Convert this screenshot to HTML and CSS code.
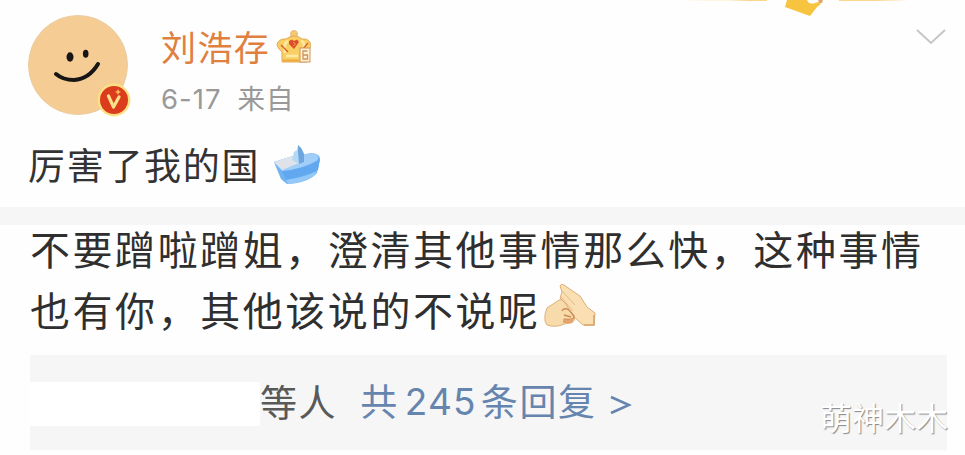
FILE: index.html
```
<!DOCTYPE html>
<html lang="zh-CN">
<head>
	<meta charset="UTF-8">
	<title>微博</title>
	<link rel="stylesheet" href="styles.css">
</head>
<body>
	<div class="post">
		<svg class="decor" width="290" height="18" viewBox="0 0 290 18">
			<path d="M0 0H88V.6H30z" fill="#fdebc8"/>
			<path d="M50 0H88V1H70z" fill="#fbd68d"/>
			<path d="M160 0H230L195 1H160z" fill="#fbd68d"/>
			<path d="M108 0H128Q130 5 136 3L139 2L142 4L138 7L131 16L106 7z" fill="#f7c440"/>
			<circle cx="141.5" cy="1" r="2.2" fill="#dfa568"/>
		</svg>
		<div class="head">
			<div class="avatar">
				<svg width="100" height="100" viewBox="0 0 100 100">
					<circle cx="50" cy="50" r="49.5" fill="#f5cc93" stroke="#ebcda2"/>
					<ellipse cx="42" cy="42" rx="3.5" ry="4.7" fill="#171515"/>
					<ellipse cx="57.7" cy="38.7" rx="2.8" ry="4" fill="#171515"/>
					<path d="M28 59Q35 65 46 65Q61 64 70 49" fill="none" stroke="#171515" stroke-width="4" stroke-linecap="round"/>
				</svg>
				<svg class="vip" width="34" height="34" viewBox="0 0 34 34">
					<circle cx="17" cy="17" r="15.2" fill="#da3c1c" stroke="#fbe084" stroke-width="2.4"/>
					<path d="M11.5 13L16.5 24L22 14" fill="none" stroke="#fde08a" stroke-width="3.2" stroke-linejoin="round" stroke-linecap="round"/>
					<path d="M21 6L22 8L24 9L22 10L21 12L20 10L18 9L20 8z" fill="#fbb75c"/>
				</svg>
			</div>
			<div class="info">
				<div class="name"><span>刘浩存</span>
					<svg width="36" height="36" viewBox="0 0 36 36">
						<circle cx="18" cy="5" r="3.5" fill="#f5c873" stroke="#e4b070" stroke-width=".8"/>
						<path d="M6 23Q-1 17 2 13Q5 9 10 10Q14 7 18 7Q23 7 26 10Q31 9 34 13Q36 18 31 23V33H6z" fill="#f9cf63" stroke="#e0ab5e"/>
						<path d="M9 24Q7 14 12 12M28 19Q29 13 25 12M10 27H22" fill="none" stroke="#fdeaa8" stroke-width="2.5"/>
						<path d="M5 16L12 23M32 14L27 20" stroke="#d9692f" stroke-width="1.6"/>
						<path d="M13 12L16 10.5L18 12L21 10.5L23 13L18 20L13 15z" fill="#dc4c2c"/>
						<path d="M17 13L19.5 15L17 17" fill="none" stroke="#f8a04b"/>
						<path d="M7 31.5H23" stroke="#eda93c" stroke-width="2"/>
						<rect x="24" y="19" width="10" height="14" fill="#fff2d5" stroke="#cf9458"/>
						<path d="M31.5 22H27V30H31.5V26H27" fill="none" stroke="#cf9458" stroke-width="1.3"/>
					</svg>
				</div>
				<div class="time">6-17<span>来自</span></div>
			</div>
			<svg class="arrow" width="30" height="16" viewBox="0 0 30 16"><path d="M1 1L15 14L29 1" fill="none" stroke="#c6c6c6" stroke-width="2"/></svg>
		</div>
		<div class="text"><span>厉害了我的国</span>
			<svg width="48" height="42" viewBox="0 0 48 42">
				<path d="M1 18L20 12L39 9Q47 10 47 15L44 29Q35 39 14 40L8 35z" fill="#6fb3f3"/>
				<path d="M1 18L20 12L40 9Q48 11 44 17Q31 25 10 28z" fill="#a0cef9"/>
				<path d="M1 18L20 12L26 19L9 26z" fill="#dde3e8"/>
				<path d="M9 27Q31 25 47 15L45 26Q32 32 13 36z" fill="#62a8f0"/>
				<path d="M13 36Q33 33 44 27L41 32Q29 39 15 40z" fill="#93c8f8"/>
				<path d="M19 16L21 8L24 6L25 1L29 5L31 10V18L26 20z" fill="#b5d9f5"/>
				<path d="M25 1L28 4L31 10V18L26 20L25 8z" fill="#6da5df"/>
			</svg>
		</div>
	</div>
	<div class="line"></div>
	<div class="comment">
		<p>不要蹭啦蹭姐，澄清其他事情那么快，这种事情<br>也有你，其他该说的不说呢<svg width="52" height="46" viewBox="0 0 52 46">
			<path d="M1 38Q0 31 3 25L15 17Q20 15 23 19L30 32Q32 38 27 40L20 41Q12 45 3 42z" fill="#f8dbab" stroke="#deb07a"/>
			<path d="M16 3Q17 0 20 2L36 13L43 24L51 30L50 42H39L29 33L22 21L16 15L18 9z" fill="#fadfb2" stroke="#dfae78"/>
			<path d="M18 8L31 22M17 14L29 28" fill="none" stroke="#e4b988"/>
			<path d="M18 28Q20 24 25 27L30 33Q30 38 20 36M20 32L27 34" fill="none" stroke="#cb8b59" stroke-width="1.4"/>
			<path d="M19 36Q26 38 30 35L28 40L19 40z" fill="#e3a56c"/>
			<path d="M50 32V42H40" fill="none" stroke="#d9a56f" stroke-width="1.6"/>
		</svg></p>
		<div class="reply">
			<div class="mask"></div>
			<span class="who">等人</span>
			<span class="all">共<b>245</b>条回复</span>
			<svg width="22" height="20" viewBox="0 0 22 20"><path d="M1 2L19 10L1 18" fill="none" stroke="#6585ae" stroke-width="2.6"/></svg>
		</div>
	</div>
	<div class="mark">萌神木木</div>
</body>
</html>
```

FILE: styles.css
```
*{
	margin:0;
	padding:0;
	box-sizing: border-box;
}
body{
	width: 965px;
	height: 455px;
	overflow: hidden;
	position: relative;
	background: #fefefe;
	font-family: "Noto Sans CJK SC", sans-serif;
}
svg{
	display: block;
	flex: none;
}
.post{
	height: 207px;
	padding: 15px 19px 0 28px;
	position: relative;
}
.decor{
	position: absolute;
	left: 679px;
	top: 0;
}
.head{
	display: flex;
	height: 112px;
}
.avatar{
	width: 100px;
	height: 100px;
	position: relative;
}
.vip{
	position: absolute;
	left: 69px;
	top: 68px;
}
.info{
	flex: 1;
	padding: 8px 0 0 33px;
}
.name{
	display: flex;
	height: 46px;
	line-height: 46px;
	font-size: 35px;
	letter-spacing: 1.4px;
	color: #e0803f;
}
.name svg{
	margin: 6px 0 0 6px;
}
.time{
	margin-top: 12px;
	height: 36px;
	line-height: 36px;
	font-family: Inter, "Noto Sans CJK SC", sans-serif;
	font-size: 27.5px;
	letter-spacing: 1px;
	color: #999;
}
.time span{
	margin-left: 16px;
}
.arrow{
	margin-top: 14px;
}
.text{
	display: flex;
	height: 76px;
	line-height: 74px;
	font-size: 37px;
	letter-spacing: 1.7px;
	color: #333;
}
.text svg{
	margin: 17px 0 0 13px;
}
.line{
	height: 18px;
	background: #f6f6f6;
}
.comment{
	padding: 0 18px 0 30px;
}
.comment p{
	height: 130px;
	line-height: 61px;
	margin-top: -7px;
	font-size: 40px;
	letter-spacing: 2.55px;
	white-space: nowrap;
	color: #2f2f2f;
}
.comment p svg{
	display: inline-block;
	margin-left: 3px;
	vertical-align: -3px;
}
.reply{
	display: flex;
	align-items: center;
	height: 95px;
	margin-top: 7px;
	font-size: 37px;
	line-height: 54px;
	letter-spacing: 1.6px;
	background: #f6f6f6;
}
.mask{
	width: 230px;
	height: 44px;
	margin-top: 2px;
	background: #fff;
}
.who{
	margin-top: -3px;
	color: #595959;
}
.all{
	display: flex;
	margin: -3px 0 0 23px;
	color: #6585ae;
}
.all b{
	margin: 2px 4px 0 6px;
	font-family: Inter, sans-serif;
	font-weight: normal;
	letter-spacing: 1.2px;
}
.reply svg{
	margin: 4px 0 0 13px;
}
.mark{
	position: absolute;
	left: 820px;
	top: 393px;
	line-height: 46px;
	font-size: 32px;
	color: #fff;
	text-shadow: 1px 1px 1px #888;
}
```
